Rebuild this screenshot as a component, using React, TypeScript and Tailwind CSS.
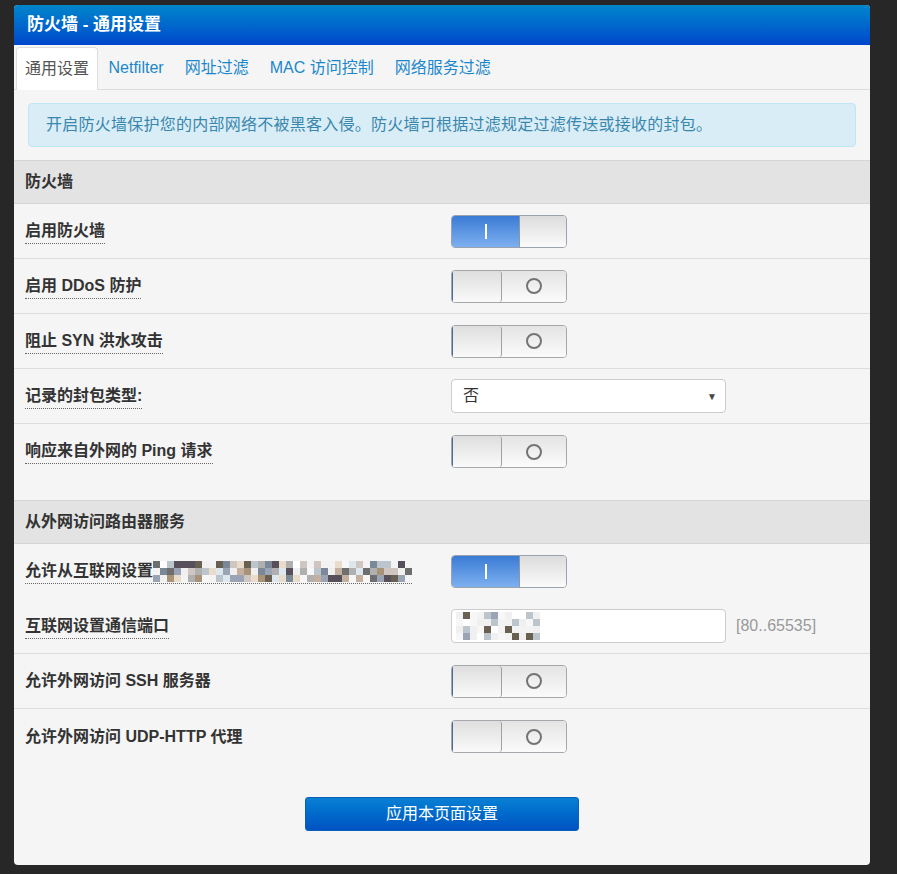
import React from "react"

const FONT = { fontFamily: '"Liberation Sans", "Noto Sans CJK SC", sans-serif' }

const PALETTE = [
  "#57505a", "#6e6e6e", "#b0b0b0", "#cfc6c2", "#e9dccb", "#7a8898", "#a89278",
  "#c5b0a0", "#dde8ee", "#f0f0f0", "#f7f7f7", "#9aa4b4", "#686050", "#ffffff",
  "#f3f3f3", "#bcc4cc",
]

// small deterministic pseudo-random stream for the blurred (pixelated) areas
function makeCells(cols: number, rows: number, seed: number, light = false) {
  let s = seed
  const out: string[] = []
  for (let i = 0; i < cols * rows; i++) {
    s = (s * 16807) % 2147483647
    const idx = Math.floor((s / 2147483647) * PALETTE.length)
    out.push(light && idx < 9 ? PALETTE[9 + (idx % 7)] : PALETTE[idx])
  }
  return out
}

function Mosaic({ cols, rows, cell, seed, light }: { cols: number; rows: number; cell: number; seed: number; light?: boolean }) {
  const cells = makeCells(cols, rows, seed, light)
  return (
    <svg width={cols * cell} height={rows * cell} className="block">
      {cells.map((c, i) => (
        <rect key={i} x={(i % cols) * cell} y={Math.floor(i / cols) * cell} width={cell} height={cell} fill={c} />
      ))}
    </svg>
  )
}

function Toggle({ on }: { on: boolean }) {
  if (on) {
    return (
      <div className="flex h-[33px] w-[116px] overflow-hidden rounded-[4px] border border-[#9aa3ad]">
        <div className="flex w-[67px] items-center justify-center bg-gradient-to-b from-[#3a7bd5] to-[#7db0ef]">
          <div className="h-[15px] w-[2px] bg-white" />
        </div>
        <div className="flex-1 border-l border-[#8a98aa] bg-gradient-to-b from-[#dcdcdc] to-[#fbfbfb]" />
      </div>
    )
  }
  return (
    <div className="flex h-[33px] w-[116px] overflow-hidden rounded-[4px] border border-[#a4a8ad]">
      <div className="w-[50px] rounded-r-[3px] border-l border-l-[#4a6a9a] border-r border-r-[#a0a0a0] bg-gradient-to-b from-[#dedede] to-[#fafafa]" />
      <div className="flex flex-1 items-center justify-center bg-gradient-to-b from-[#e4e4e4] to-[#fbfbfb]">
        <div className="h-[16px] w-[16px] rounded-full border-2 border-[#747474]" />
      </div>
    </div>
  )
}

function Label({ children, dotted = true }: { children: React.ReactNode; dotted?: boolean }) {
  return (
    <div className="w-[426px] shrink-0">
      <span className={`inline-flex items-center font-bold text-[16px] text-[#333] ${dotted ? "border-b border-dotted border-[#666]" : ""}`}>
        {children}
      </span>
    </div>
  )
}

function Row({ children, border = true }: { children: React.ReactNode; border?: boolean }) {
  return (
    <div className={`flex h-[55px] items-center pl-[11px] ${border ? "border-b border-[#dddddd]" : ""}`}>{children}</div>
  )
}

function SectionHead({ title }: { title: string }) {
  return (
    <div className="flex h-[44px] items-center border-y border-[#d6d6d6] bg-[#e3e3e3] pl-[11px] text-[16px] font-bold text-[#333]">
      {title}
    </div>
  )
}

export default function App() {
  const tabs = ["通用设置", "Netfilter", "网址过滤", "MAC 访问控制", "网络服务过滤"]

  return (
    <div className="min-h-[874px] bg-[#272727] pt-[5px] pl-[14px]" style={FONT}>
      <div className="w-[856px] overflow-hidden rounded-[4px] bg-[#f5f5f5]">
        <div className="flex h-[40px] items-center bg-gradient-to-b from-[#0285cb] to-[#0045cc] pl-[13px] text-[17px] font-bold text-white">
          防火墙 - 通用设置
        </div>

        <div className="flex h-[45px] items-end border-b border-[#dcdcdc] pl-[2px]">
          {tabs.map((t, i) =>
            i === 0 ? (
              <div key={t} className="-mb-px flex h-[43px] items-center rounded-t-[4px] border border-b-0 border-[#dddddd] bg-white px-[8px] text-[16px] text-[#555]">
                {t}
              </div>
            ) : (
              <div key={t} className="flex h-[43px] items-center px-[10.5px] text-[16px] text-[#1a87cc]">
                {t}
              </div>
            )
          )}
        </div>

        <div className="px-[14px] pt-[13px] pb-[13px]">
          <div className="flex h-[44px] items-center rounded-[4px] border border-[#bce8f1] bg-[#d9edf7] pl-[17px] text-[16px] tracking-[0.25px] text-[#3a87ad]">
            开启防火墙保护您的内部网络不被黑客入侵。防火墙可根据过滤规定过滤传送或接收的封包。
          </div>
        </div>

        <SectionHead title="防火墙" />
        <Row>
          <Label>启用防火墙</Label>
          <Toggle on />
        </Row>
        <Row>
          <Label>启用 DDoS 防护</Label>
          <Toggle on={false} />
        </Row>
        <Row>
          <Label>阻止 SYN 洪水攻击</Label>
          <Toggle on={false} />
        </Row>
        <Row>
          <Label>记录的封包类型:</Label>
          <div className="flex h-[34px] w-[275px] items-center justify-between rounded-[4px] border border-[#cccccc] bg-white pl-[11px] pr-[8px] text-[16px] text-[#333]">
            <span>否</span>
            <span className="text-[10px] text-[#444]">▼</span>
          </div>
        </Row>
        <Row border={false}>
          <Label>响应来自外网的 Ping 请求</Label>
          <Toggle on={false} />
        </Row>

        <div className="h-[21px]" />

        <SectionHead title="从外网访问路由器服务" />
        <Row border={false}>
          <Label>
            允许从互联网设置
            <Mosaic cols={37} rows={3} cell={7} seed={12345} />
          </Label>
          <Toggle on />
        </Row>
        <Row>
          <Label>互联网设置通信端口</Label>
          <div className="flex h-[34px] w-[275px] items-center overflow-hidden rounded-[4px] border border-[#cccccc] bg-white pl-[4px]">
            <Mosaic cols={12} rows={4} cell={7} seed={777} light />
          </div>
          <span className="ml-[10px] text-[16px] text-[#999]">[80..65535]</span>
        </Row>
        <Row>
          <Label dotted={false}>允许外网访问 SSH 服务器</Label>
          <Toggle on={false} />
        </Row>
        <Row border={false}>
          <Label dotted={false}>允许外网访问 UDP-HTTP 代理</Label>
          <Toggle on={false} />
        </Row>

        <div className="flex justify-center pt-[33px] pb-[34px]">
          <div className="flex h-[34px] w-[274px] items-center justify-center rounded-[3px] border border-[#0a5fb8] bg-gradient-to-b from-[#0a80d4] to-[#0052c2] text-[16px] text-white">
            应用本页面设置
          </div>
        </div>
      </div>
    </div>
  )
}
